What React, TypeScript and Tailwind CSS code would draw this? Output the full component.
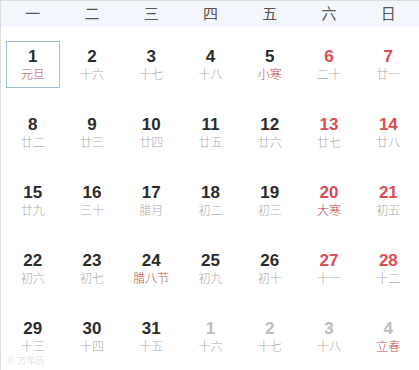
const weekdays = ["一", "二", "三", "四", "五", "六", "日"]

type Day = { n: number; lunar: string; other?: boolean; term?: boolean }

const days: Day[] = [
  { n: 1, lunar: "元旦", term: true },
  { n: 2, lunar: "十六" },
  { n: 3, lunar: "十七" },
  { n: 4, lunar: "十八" },
  { n: 5, lunar: "小寒", term: true },
  { n: 6, lunar: "二十" },
  { n: 7, lunar: "廿一" },
  { n: 8, lunar: "廿二" },
  { n: 9, lunar: "廿三" },
  { n: 10, lunar: "廿四" },
  { n: 11, lunar: "廿五" },
  { n: 12, lunar: "廿六" },
  { n: 13, lunar: "廿七" },
  { n: 14, lunar: "廿八" },
  { n: 15, lunar: "廿九" },
  { n: 16, lunar: "三十" },
  { n: 17, lunar: "腊月" },
  { n: 18, lunar: "初二" },
  { n: 19, lunar: "初三" },
  { n: 20, lunar: "大寒", term: true },
  { n: 21, lunar: "初五" },
  { n: 22, lunar: "初六" },
  { n: 23, lunar: "初七" },
  { n: 24, lunar: "腊八节", term: true },
  { n: 25, lunar: "初九" },
  { n: 26, lunar: "初十" },
  { n: 27, lunar: "十一" },
  { n: 28, lunar: "十二" },
  { n: 29, lunar: "十三" },
  { n: 30, lunar: "十四" },
  { n: 31, lunar: "十五" },
  { n: 1, lunar: "十六", other: true },
  { n: 2, lunar: "十七", other: true },
  { n: 3, lunar: "十八", other: true },
  { n: 4, lunar: "立春", other: true, term: true },
]

export default function App() {
  return (
    <div
      className="relative w-[419px] h-[370px] overflow-hidden bg-white border-t border-l border-[#dcdcdc]"
      style={{ fontFamily: '"Liberation Sans", "Noto Sans CJK SC", sans-serif' }}
    >
      <div className="h-[26px] bg-[#f3f7fd] pl-[2px]">
        <div className="grid grid-cols-7 w-[415px] h-full">
          {weekdays.map((w) => (
            <div key={w} className="flex items-center justify-center text-[15px] text-[#555]">
              {w}
            </div>
          ))}
        </div>
      </div>

      <div className="grid grid-cols-7 w-[415px] ml-[2px] mt-[3px]">
        {days.map((d, i) => {
          const weekend = i % 7 >= 5
          const numColor = d.other ? "text-[#bbbbbb]" : weekend ? "text-[#dd4b53]" : "text-[#2b2b2b]"
          const lunarColor = d.term ? "text-[#c24848]" : "text-[#acacac]"
          const selected = i === 0
          return (
            <div key={i} className="h-[68px] flex items-center justify-center">
              <div
                className={`w-[54px] h-[47px] flex flex-col items-center justify-center ${
                  selected ? "border border-[#9dbfdc]" : ""
                }`}
              >
                <span className={`text-[17px] font-bold leading-[19px] ${numColor}`}>{d.n}</span>
                <span
                  className={`text-[12px] leading-[16px] font-light ${lunarColor}`}
                  style={{ fontFamily: '"Noto Sans CJK SC", sans-serif' }}
                >
                  {d.lunar}
                </span>
              </div>
            </div>
          )
        })}
      </div>

      <div className="absolute left-[5px] bottom-[4px] text-[9px] text-[#e2e2e2] leading-none">
        ⓟ 万年历
      </div>
    </div>
  )
}
